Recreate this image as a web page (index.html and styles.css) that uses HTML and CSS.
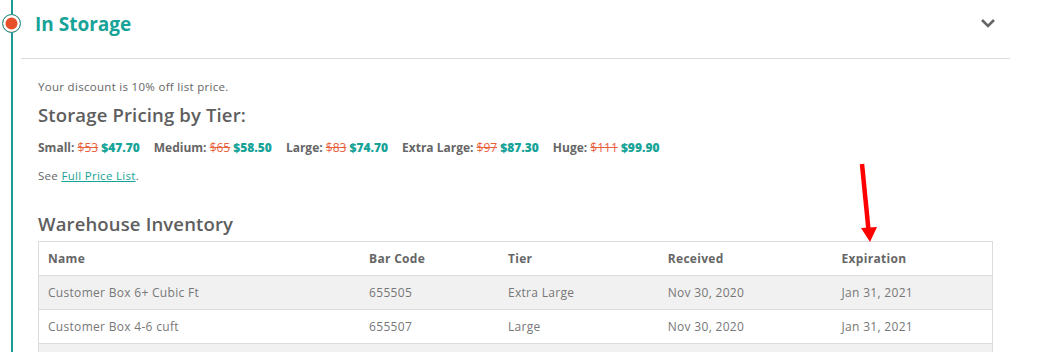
FILE: index.html
```html
<!DOCTYPE html>
<html>
<head>
<meta charset="utf-8">
<link rel="stylesheet" href="styles.css">
</head>
<body>
<div class="step">
  <div class="rail"><span class="dot"></span></div>
  <div class="main">
    <div class="header">
      <h2 class="title">In Storage</h2>
      <svg class="chev" width="16" height="10" viewBox="0 0 16 10"><path d="M2 2 L8 8 L14 2" fill="none" stroke="#666" stroke-width="2.6"/></svg>
    </div>
    <div class="content">
      <p class="discount">Your discount is 10% off list price.</p>
      <h3 class="sub">Storage Pricing by Tier:</h3>
      <div class="prices">
        <span class="tier">Small: <s>$53</s> <b>$47.70</b></span>
        <span class="tier">Medium: <s>$65</s> <b>$58.50</b></span>
        <span class="tier">Large: <s>$83</s> <b>$74.70</b></span>
        <span class="tier">Extra Large: <s>$97</s> <b>$87.30</b></span>
        <span class="tier">Huge: <s>$111</s> <b>$99.90</b></span>
      </div>
      <p class="see">See <a href="#">Full Price List</a>.</p>
      <h3 class="sub inv">Warehouse Inventory</h3>
      <table class="grid">
        <colgroup><col class="c1"><col class="c2"><col class="c3"><col class="c4"><col class="c5"></colgroup>
        <thead><tr><th>Name</th><th>Bar Code</th><th>Tier</th><th>Received</th><th>Expiration</th></tr></thead>
        <tbody>
          <tr class="odd"><td>Customer Box 6+ Cubic Ft</td><td>655505</td><td>Extra Large</td><td>Nov 30, 2020</td><td>Jan 31, 2021</td></tr>
          <tr><td>Customer Box 4-6 cuft</td><td>655507</td><td>Large</td><td>Nov 30, 2020</td><td>Jan 31, 2021</td></tr>
          <tr class="odd"><td>&nbsp;</td><td></td><td></td><td></td><td></td></tr>
        </tbody>
      </table>
    </div>
  </div>
</div>
<svg class="arrow" width="30" height="90" viewBox="0 0 30 90"><path d="M10 2 L16.5 68" stroke="#ff0000" stroke-width="4.5" fill="none"/><path d="M9 66 L25 65 L18 80 Z" fill="#ff0000"/></svg>
</body>
</html>
```
FILE: styles.css
```css
html, body { margin: 0; padding: 0; background: #fff; }
body { font-family: "Open Sans", "Liberation Sans", sans-serif; color: #666; overflow: hidden; height: 352px; position: relative; }
.step { display: flex; }
.rail { width: 21px; flex: none; position: relative; }
.rail::before { content: ""; position: absolute; left: 11px; top: 0; bottom: 0; width: 1.5px; background: #1a9c93; }
.dot { position: absolute; left: 1.5px; top: 13.5px; width: 17px; height: 17px; border-radius: 50%; background: #e8502c; border: 1.5px solid #1a9c93; box-shadow: inset 0 0 0 2.5px #fff; }
.main { flex: 1; margin-right: 53px; }
.header { height: 59px; box-sizing: border-box; border-bottom: 1px solid #dcdcdc; display: flex; align-items: flex-start; justify-content: space-between; padding: 11px 14px 0 14px; }
.title { margin: 0; font-size: 19px; font-weight: 700; color: #17a398; line-height: 26px; }
.chev { margin-top: 7px; }
.content { padding: 0 17px 0 17px; }
.discount { margin: 20px 0 0; font-size: 11.5px; letter-spacing: 0.3px; line-height: 16px; }
.sub { margin: 8px 0 0; font-size: 18.5px; font-weight: 600; line-height: 24px; color: #5e5e5e; letter-spacing: 0.15px; }
.prices { margin-top: 13px; font-size: 12px; font-weight: 700; line-height: 16px; display: flex; gap: 14px; color: #666; }
.prices s { color: #e8603c; font-weight: 400; }
.prices b { color: #17a398; }
.see { margin: 12px 0 0; font-size: 11.5px; letter-spacing: 0.3px; line-height: 16px; }
.see a { color: #17a398; }
.inv { margin-top: 28px; }
.grid { margin-top: 5px; width: 955px; border-collapse: collapse; border: 1px solid #dcdcdc; font-size: 12px; letter-spacing: 0.3px; }
.c1 { width: 322px; } .c2 { width: 139px; } .c3 { width: 160px; } .c4 { width: 174px; } .c5 { width: 160px; }
.grid th, .grid td { text-align: left; padding: 0 9px; height: 33px; border-bottom: 1px solid #dcdcdc; }
.grid th { font-weight: 700; color: #666; }
.grid td { font-weight: 400; color: #777; }
.odd { background: #f1f1f1; }
.arrow { position: absolute; left: 852px; top: 162px; }
```
